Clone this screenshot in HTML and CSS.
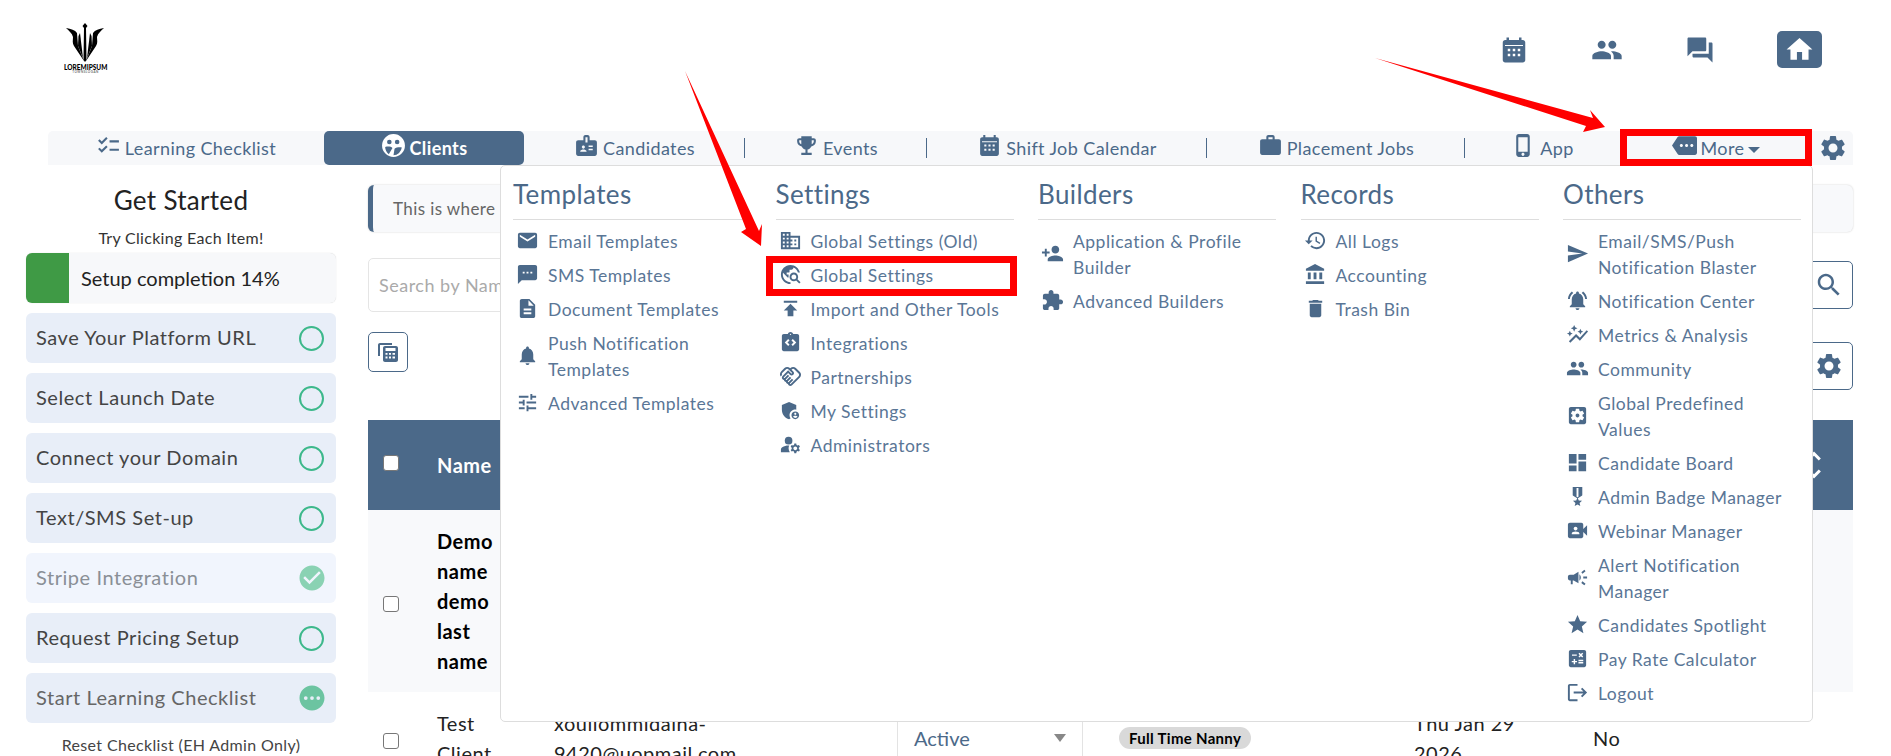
FILE: index.html
```html
<html>
    <head>
        <title>Clients</title>
        <link rel="stylesheet" href="styles.css">
    </head>

    <body>
        <!-- Icon set -->
        <svg class="defs" width="0" height="0">
            <symbol id="i-checklist" viewBox="0 0 24 24"><path d="M22 7h-9v2h9V7zm0 8h-9v2h9v-2zM5.54 11 2 7.46l1.41-1.41 2.12 2.12 4.24-4.24 1.41 1.41L5.54 11zm0 8L2 15.46l1.41-1.41 2.12 2.12 4.24-4.24 1.41 1.41L5.54 19z"/></symbol>
            <symbol id="i-clients" viewBox="0 0 24 24"><path fill-rule="evenodd" d="M12 1a11 11 0 1 0 0 22 11 11 0 0 0 0-22zM8 6.500a2.200 2.200 0 1 1 0 4.400 2.200 2.200 0 0 1 0-4.400zm7.500 0a2.200 2.200 0 1 1 0 4.400 2.200 2.200 0 0 1 0-4.400zM4 13.500c2.500-.8 5.500-.6 7 .8l-3.500 6A9 9 0 0 1 4 13.500zm9 1.500c1.800-1.300 5-1.600 7-1a8.500 8.500 0 0 1-8 7.300z"/></symbol>
            <symbol id="i-badge" viewBox="0 0 24 24"><path d="M20 7h-5V4c0-1.100-.9-2-2-2h-2c-1.100 0-2 .9-2 2v3H4c-1.100 0-2 .9-2 2v11c0 1.100.9 2 2 2h16c1.100 0 2-.9 2-2V9c0-1.100-.9-2-2-2zM9 12c.83 0 1.500.67 1.500 1.500S9.830 15 9 15s-1.500-.67-1.500-1.500S8.170 12 9 12zm3 6H6v-.75c0-1 2-1.500 3-1.500s3 .5 3 1.500V18zm1-9h-2V4h2v5zm5 7.500h-4V15h4v1.500zm0-3h-4V12h4v1.500z"/></symbol>
            <symbol id="i-trophy" viewBox="0 0 24 24"><path d="M19 5h-2V3H7v2H5c-1.100 0-2 .9-2 2v1c0 2.550 1.920 4.630 4.390 4.940.63 1.500 1.980 2.630 3.610 2.960V19H7v2h10v-2h-4v-3.100c1.630-.33 2.980-1.460 3.610-2.960C19.080 12.630 21 10.550 21 8V7c0-1.100-.9-2-2-2zM5 8V7h2v3.820C5.840 10.400 5 9.300 5 8zm14 0c0 1.300-.84 2.400-2 2.820V7h2v1z"/></symbol>
            <symbol id="i-calendar" viewBox="0 0 24 24"><path fill-rule="evenodd" d="M19 4h-1V2h-2v2H8V2H6v2H5c-1.100 0-2 .9-2 2v14c0 1.100.9 2 2 2h14c1.100 0 2-.9 2-2V6c0-1.100-.9-2-2-2zM4.800 8h14.400v.8H4.800zM7 11v2h2v-2zm4 0v2h2v-2zm4 0v2h2v-2zm-8 4v2h2v-2zm4 0v2h2v-2zm4 0v2h2v-2z"/></symbol>
            <symbol id="i-work" viewBox="0 0 24 24"><path d="M20 6h-4V4c0-1.110-.89-2-2-2h-4c-1.110 0-2 .89-2 2v2H4c-1.110 0-1.990.89-1.990 2L2 19c0 1.110.89 2 2 2h16c1.110 0 2-.89 2-2V8c0-1.110-.89-2-2-2zm-6 0h-4V4h4v2z"/></symbol>
            <symbol id="i-phone" viewBox="0 0 24 24"><path d="M15.500 1h-8C6.120 1 5 2.120 5 3.500v17C5 21.880 6.120 23 7.500 23h8c1.380 0 2.500-1.120 2.500-2.500v-17C18 2.120 16.880 1 15.500 1zm-4 21c-.83 0-1.500-.67-1.500-1.500s.67-1.500 1.500-1.500 1.500.67 1.500 1.500-.67 1.500-1.500 1.500zm4.500-4H7V4h9v14z"/></symbol>
            <symbol id="i-more" viewBox="0 0 24 24"><path d="M22 3H7c-.69 0-1.230.35-1.590.88L0 12l5.410 8.110c.36.53.9.89 1.590.89h15c1.100 0 2-.9 2-2V5c0-1.100-.9-2-2-2zM9 13.500c-.83 0-1.500-.67-1.500-1.500s.67-1.500 1.500-1.500 1.500.67 1.500 1.500-.67 1.500-1.500 1.500zm5 0c-.83 0-1.500-.67-1.500-1.500s.67-1.500 1.500-1.500 1.500.67 1.500 1.500-.67 1.500-1.500 1.500zm5 0c-.83 0-1.500-.67-1.500-1.500s.67-1.500 1.500-1.500 1.500.67 1.500 1.500-.67 1.500-1.500 1.500z"/></symbol>
            <symbol id="i-gear" viewBox="0 0 24 24"><path d="M19.140 12.940c.04-.3.06-.61.06-.94 0-.32-.02-.64-.07-.94l2.030-1.580c.18-.14.23-.41.12-.61l-1.920-3.320c-.12-.22-.37-.29-.59-.22l-2.390.96c-.5-.38-1.030-.7-1.620-.94l-.36-2.540c-.04-.24-.24-.41-.48-.41h-3.840c-.24 0-.43.17-.47.41l-.36 2.540c-.59.24-1.130.57-1.620.94l-2.390-.96c-.22-.08-.47 0-.59.22L2.740 8.870c-.12.21-.08.47.12.61l2.030 1.580c-.05.3-.09.63-.09.94s.02.64.07.94l-2.030 1.580c-.18.14-.23.41-.12.61l1.920 3.320c.12.22.37.29.59.22l2.390-.96c.5.38 1.030.7 1.620.94l.36 2.540c.05.24.24.41.48.41h3.840c.24 0 .44-.17.47-.41l.36-2.540c.59-.24 1.130-.56 1.620-.94l2.390.96c.22.08.47 0 .59-.22l1.920-3.320c.12-.22.07-.47-.12-.61l-2.010-1.580zM12 15.600c-1.980 0-3.600-1.620-3.600-3.600s1.620-3.600 3.600-3.600 3.600 1.620 3.600 3.600-1.620 3.600-3.600 3.600z"/></symbol>
            <symbol id="i-people" viewBox="0 0 24 24"><path d="M16 11c1.660 0 2.990-1.340 2.990-3S17.660 5 16 5c-1.660 0-3 1.340-3 3s1.340 3 3 3zm-8 0c1.660 0 2.990-1.340 2.990-3S9.660 5 8 5C6.340 5 5 6.340 5 8s1.340 3 3 3zm0 2c-2.330 0-7 1.170-7 3.500V19h14v-2.500c0-2.330-4.670-3.500-7-3.500zm8 0c-.29 0-.62.02-.97.05 1.160.84 1.970 1.970 1.970 3.450V19h6v-2.500c0-2.330-4.670-3.500-7-3.500z"/></symbol>
            <symbol id="i-forum" viewBox="0 0 24 24"><path d="M21 6h-2v9H6v2c0 .55.45 1 1 1h11l4 4V7c0-.55-.45-1-1-1zm-4 6V3c0-.55-.45-1-1-1H3c-.55 0-1 .45-1 1v14l4-4h10c.55 0 1-.45 1-1z"/></symbol>
            <symbol id="i-home" viewBox="0 0 24 24"><path d="M10 20v-6h4v6h5v-8h3L12 3 2 12h3v8z"/></symbol>
            <symbol id="i-email" viewBox="0 0 24 24"><path d="M20 4H4c-1.100 0-1.990.9-1.990 2L2 18c0 1.100.9 2 2 2h16c1.100 0 2-.9 2-2V6c0-1.100-.9-2-2-2zm0 4-8 5-8-5V6l8 5 8-5v2z"/></symbol>
            <symbol id="i-sms" viewBox="0 0 24 24"><path d="M20 2H4c-1.100 0-1.990.9-1.990 2L2 22l4-4h14c1.100 0 2-.9 2-2V4c0-1.100-.9-2-2-2zM9 11H7V9h2v2zm4 0h-2V9h2v2zm4 0h-2V9h2v2z"/></symbol>
            <symbol id="i-doc" viewBox="0 0 24 24"><path d="M14 2H6c-1.100 0-1.990.9-1.990 2L4 20c0 1.100.89 2 1.990 2H18c1.100 0 2-.9 2-2V8l-6-6zm2 16H8v-2h8v2zm0-4H8v-2h8v2zm-3-5V3.500L18.500 9H13z"/></symbol>
            <symbol id="i-bell" viewBox="0 0 24 24"><path d="M12 22c1.100 0 2-.9 2-2h-4c0 1.100.89 2 2 2zm6-6v-5c0-3.070-1.640-5.640-4.500-6.320V4c0-.83-.67-1.500-1.500-1.500s-1.500.67-1.500 1.500v.68C7.630 5.360 6 7.920 6 11v5l-2 2v1h16v-1l-2-2z"/></symbol>
            <symbol id="i-tune" viewBox="0 0 24 24"><path d="M3 17v2h6v-2H3zM3 5v2h10V5H3zm10 16v-2h8v-2h-8v-2h-2v6h2zM7 9v2H3v2h4v2h2V9H7zm14 4v-2H11v2h10zm-6-4h2V7h4V5h-4V3h-2v6z"/></symbol>
            <symbol id="i-domain" viewBox="0 0 24 24"><path d="M12 7V3H2v18h20V7H12zM6 19H4v-2h2v2zm0-4H4v-2h2v2zm0-4H4V9h2v2zm0-4H4V5h2v2zm4 12H8v-2h2v2zm0-4H8v-2h2v2zm0-4H8V9h2v2zm0-4H8V5h2v2zm10 12h-8v-2h2v-2h-2v-2h2v-2h-2V9h8v10zm-2-8h-2v2h2v-2zm0 4h-2v2h2v-2z"/></symbol>
            <symbol id="i-explore" viewBox="0 0 24 24"><path d="M19.300 16.900c.4-.7.7-1.500.7-2.400 0-2.500-2-4.500-4.500-4.500S11 12 11 14.500s2 4.500 4.500 4.500c.9 0 1.700-.3 2.400-.7l3.200 3.200 1.400-1.400-3.200-3.200zm-3.800.1c-1.400 0-2.500-1.100-2.500-2.500s1.100-2.500 2.500-2.500 2.500 1.100 2.500 2.500-1.100 2.500-2.500 2.500zM12 20v2C6.480 22 2 17.520 2 12S6.480 2 12 2c4.840 0 8.870 3.440 9.800 8h-2.070c-.64-2.460-2.400-4.470-4.730-5.410V5c0 1.100-.9 2-2 2h-2v2c0 .55-.45 1-1 1H8v2h2v3H9l-4.790-4.790C4.080 10.790 4 11.380 4 12c0 4.410 3.590 8 8 8z"/></symbol>
            <symbol id="i-publish" viewBox="0 0 24 24"><path d="M5 4v2h14V4H5zm0 10h4v6h6v-6h4l-7-7-7 7z"/></symbol>
            <symbol id="i-integrations" viewBox="0 0 24 24"><path d="M19 3h-4.180C14.400 1.840 13.300 1 12 1s-2.400.84-2.820 2H5c-1.100 0-2 .9-2 2v14c0 1.100.9 2 2 2h14c1.100 0 2-.9 2-2V5c0-1.100-.9-2-2-2zm-8 11.170-1.410 1.420L6 12l3.590-3.590L11 9.830 8.830 12 11 14.170zm1-9.920c-.41 0-.75-.34-.75-.75s.34-.75.75-.75.75.34.75.75-.34.75-.75.75zm2.410 11.340L13 14.170 15.170 12 13 9.830l1.410-1.420L18 12l-3.590 3.590z"/></symbol>
            <symbol id="i-handshake" viewBox="0 0 24 24"><path d="M12.220 19.850c-.18.18-.5.21-.71 0-.18-.18-.21-.5 0-.71l3.390-3.390-1.410-1.410-3.390 3.390c-.19.2-.51.19-.71 0-.21-.21-.18-.53 0-.71l3.390-3.390-1.410-1.410-3.390 3.390c-.18.18-.5.21-.71 0-.19-.19-.19-.51 0-.71l3.390-3.390-1.420-1.410-3.390 3.390c-.18.18-.5.21-.71 0-.19-.2-.19-.51 0-.71L9.520 8.400l1.870 1.860c.95.95 2.590.94 3.540 0 .98-.98.98-2.560 0-3.540l-1.860-1.860.28-.28c.78-.78 2.050-.78 2.830 0l4.240 4.240c.78.78.78 2.050 0 2.830l-8.200 8.200zm9.610-6.780c1.560-1.560 1.560-4.090 0-5.660l-4.240-4.240c-1.560-1.560-4.090-1.560-5.660 0l-.28.28-.28-.28c-1.560-1.560-4.090-1.560-5.660 0L2.170 6.710c-1.420 1.420-1.550 3.630-.4 5.190l1.450-1.450c-.39-.75-.26-1.700.37-2.330l3.540-3.540c.78-.78 2.050-.78 2.830 0l3.560 3.560c.18.18.21.5 0 .71-.21.21-.53.18-.71 0L9.520 5.570l-5.800 5.790c-.98.97-.98 2.560 0 3.540.39.39.89.63 1.420.7.07.52.3 1.020.7 1.420.4.4.9.63 1.420.7.07.52.3 1.020.7 1.420.4.4.9.63 1.420.7.07.54.31 1.030.7 1.420.47.47 1.100.73 1.770.73.67 0 1.300-.26 1.770-.73l8.210-8.190z"/></symbol>
            <symbol id="i-shield" viewBox="0 0 24 24"><path d="M17 11c.34 0 .67.04 1 .09V6.270L10.500 3 3 6.270v4.910c0 4.540 3.200 8.790 7.500 9.820.55-.13 1.080-.32 1.600-.55-.69-.98-1.100-2.170-1.100-3.450 0-3.310 2.690-6 6-6zM17 13c-2.210 0-4 1.790-4 4s1.790 4 4 4 4-1.790 4-4-1.790-4-4-4zm0 1.380c.62 0 1.120.51 1.120 1.120s-.51 1.120-1.120 1.120-1.120-.51-1.120-1.120.5-1.120 1.120-1.120zm0 5.370c-.93 0-1.740-.46-2.240-1.170.05-.72 1.510-1.080 2.240-1.080s2.190.36 2.240 1.080c-.5.71-1.310 1.170-2.240 1.170z"/></symbol>
            <symbol id="i-admins" viewBox="0 0 24 24"><circle cx="10" cy="8" r="4"/><path d="M10.670 13.020c-.22-.01-.44-.02-.67-.02-2.420 0-4.680.67-6.610 1.820-.88.52-1.390 1.500-1.390 2.530V20h9.260c-.79-1.130-1.260-2.510-1.260-4 0-1.070.25-2.070.67-2.980zM20.750 16c0-.22-.03-.42-.06-.63l1.140-1.010-1-1.730-1.450.49c-.32-.27-.68-.48-1.080-.63L18 11h-2l-.3 1.490c-.4.15-.76.36-1.080.63l-1.450-.49-1 1.730 1.140 1.010c-.03.21-.06.41-.06.63s.03.42.06.63l-1.140 1.010 1 1.730 1.450-.49c.32.27.68.48 1.080.63L16 21h2l.3-1.490c.4-.15.76-.36 1.080-.63l1.450.49 1-1.730-1.140-1.010c.03-.21.06-.41.06-.63zM17 18c-1.100 0-2-.9-2-2s.9-2 2-2 2 .9 2 2-.9 2-2 2z"/></symbol>
            <symbol id="i-personadd" viewBox="0 0 24 24"><path d="M15 12c2.210 0 4-1.790 4-4s-1.790-4-4-4-4 1.790-4 4 1.790 4 4 4zm-9-2V7H4v3H1v2h3v3h2v-3h3v-2H6zm9 4c-2.670 0-8 1.340-8 4v2h16v-2c0-2.660-5.330-4-8-4z"/></symbol>
            <symbol id="i-puzzle" viewBox="0 0 24 24"><path d="M20.500 11H19V7c0-1.100-.9-2-2-2h-4V3.500C13 2.120 11.880 1 10.500 1S8 2.120 8 3.500V5H4c-1.100 0-1.990.9-1.990 2v3.800H3.500c1.490 0 2.700 1.210 2.700 2.700s-1.210 2.700-2.700 2.700H2V20c0 1.100.9 2 2 2h3.800v-1.500c0-1.490 1.210-2.700 2.700-2.700 1.490 0 2.700 1.210 2.700 2.700V22H17c1.100 0 2-.9 2-2v-4h1.500c1.380 0 2.500-1.120 2.500-2.500S21.880 11 20.500 11z"/></symbol>
            <symbol id="i-history" viewBox="0 0 24 24"><path d="M13 3c-4.970 0-9 4.030-9 9H1l3.890 3.890.07.14L9 12H6c0-3.870 3.130-7 7-7s7 3.130 7 7-3.130 7-7 7c-1.930 0-3.680-.79-4.940-2.060l-1.420 1.420C8.270 19.990 10.510 21 13 21c4.970 0 9-4.030 9-9s-4.030-9-9-9zm-1 5v5l4.280 2.540.72-1.210-3.500-2.080V8H12z"/></symbol>
            <symbol id="i-bank" viewBox="0 0 24 24"><path d="M4 10v7h3v-7H4zm6 0v7h3v-7h-3zM2 22h19v-3H2v3zm14-12v7h3v-7h-3zm-4.500-9L2 6v2h19V6l-9.500-5z"/></symbol>
            <symbol id="i-trash" viewBox="0 0 24 24"><path d="M6 19c0 1.100.9 2 2 2h8c1.100 0 2-.9 2-2V7H6v12zM19 4h-3.500l-1-1h-5l-1 1H5v2h14V4z"/></symbol>
            <symbol id="i-send" viewBox="0 0 24 24"><path d="M2.010 21 23 12 2.010 3 2 10l15 2-15 2z"/></symbol>
            <symbol id="i-bellring" viewBox="0 0 24 24"><path d="M7.580 4.080 6.150 2.650C3.750 4.480 2.170 7.300 2.030 10.500h2c.15-2.650 1.510-4.970 3.550-6.420zm12.390 6.420h2c-.15-3.200-1.730-6.020-4.120-7.850l-1.420 1.430c2.020 1.450 3.390 3.770 3.540 6.420zM18 11c0-3.070-1.640-5.640-4.500-6.320V4c0-.83-.67-1.500-1.500-1.500s-1.500.67-1.500 1.500v.68C7.630 5.360 6 7.920 6 11v5l-2 2v1h16v-1l-2-2v-5zm-6 11c1.100 0 2-.9 2-2h-4c.01 1.100.9 2 2 2z"/></symbol>
            <symbol id="i-graph" viewBox="0 0 24 24"><path d="M14.060 9.940 12 9l2.060-.94L15 6l.94 2.060L18 9l-2.060.94L15 12l-.94-2.060zM4 14l.94-2.060L7 11l-2.060-.94L4 8l-.94 2.060L1 11l2.060.94L4 14zm4.500-5 1.090-2.410L12 5.500 9.590 4.410 8.500 2 7.410 4.410 5 5.500l2.410 1.090L8.500 9zm-4 11.500 6-6.010 4 4L23 8.930l-1.410-1.410-7.090 7.970-4-4L3 19l1.500 1.500z"/></symbol>
            <symbol id="i-gearbox" viewBox="0 0 24 24"><path d="M12 10c-1.100 0-2 .9-2 2s.9 2 2 2 2-.9 2-2-.9-2-2-2zm7-7H5c-1.110 0-2 .9-2 2v14c0 1.100.89 2 2 2h14c1.110 0 2-.9 2-2V5c0-1.100-.89-2-2-2zm-1.750 9c0 .23-.02.46-.05.68l1.480 1.160c.13.11.17.3.08.45l-1.400 2.420c-.09.15-.27.21-.43.15l-1.740-.7c-.36.28-.76.51-1.180.69l-.26 1.850c-.03.17-.18.3-.35.3h-2.800c-.17 0-.32-.13-.35-.29l-.26-1.850c-.43-.18-.82-.41-1.180-.69l-1.740.7c-.16.06-.34 0-.43-.15l-1.400-2.420c-.09-.15-.05-.34.08-.45l1.480-1.160c-.03-.23-.05-.46-.05-.69 0-.23.02-.46.05-.68l-1.480-1.160c-.13-.11-.17-.3-.08-.45l1.400-2.420c.09-.15.27-.21.43-.15l1.740.7c.36-.28.76-.51 1.180-.69l.26-1.850c.03-.17.18-.3.35-.3h2.800c.17 0 .32.13.35.29l.26 1.850c.43.18.82.41 1.180.69l1.740-.7c.16-.06.34 0 .43.15l1.400 2.420c.09.15.05.34-.08.45l-1.480 1.160c.03.23.05.46.05.69z"/></symbol>
            <symbol id="i-board" viewBox="0 0 24 24"><path d="M3 13h8V3H3v10zm0 8h8v-6H3v6zm10 0h8V11h-8v10zm0-18v6h8V3h-8z"/></symbol>
            <symbol id="i-medal" viewBox="0 0 24 24"><path d="M17 10.430V2H7v8.430c0 .35.18.68.49.86l4.180 2.510-.99 2.340-3.410.29 2.590 2.240L9.070 22 12 20.230 14.930 22l-.78-3.330 2.590-2.240-3.410-.29-.99-2.340 4.180-2.510c.3-.18.48-.5.48-.86zm-4 1.800-1 .6-1-.6V3h2v9.230z"/></symbol>
            <symbol id="i-video" viewBox="0 0 24 24"><path d="M18 10.480V6c0-1.100-.9-2-2-2H4c-1.100 0-2 .9-2 2v12c0 1.100.9 2 2 2h12c1.100 0 2-.9 2-2v-4.480l4 3.980v-11l-4 3.980zM10 8c1.100 0 2 .9 2 2s-.9 2-2 2-2-.9-2-2 .9-2 2-2zm4 8H6v-.57c0-.81.48-1.530 1.220-1.850.85-.37 1.790-.58 2.780-.58.99 0 1.930.21 2.780.58.74.32 1.220 1.040 1.220 1.850V16z"/></symbol>
            <symbol id="i-megaphone" viewBox="0 0 24 24"><path d="M18 11v2h4v-2h-4zm-2 6.610c.96.71 2.210 1.650 3.200 2.390.4-.53.8-1.070 1.200-1.600-.99-.74-2.240-1.680-3.200-2.400-.4.54-.8 1.080-1.200 1.610zM20.400 5.600c-.4-.53-.8-1.070-1.200-1.600-.99.74-2.240 1.680-3.200 2.400.4.53.8 1.070 1.200 1.600.96-.72 2.210-1.650 3.200-2.400zM4 9c-1.100 0-2 .9-2 2v2c0 1.100.9 2 2 2h1v4h2v-4h1l5 3V6L8 9H4zm11.500 3c0-1.330-.58-2.530-1.500-3.350v6.690c.92-.81 1.500-2.010 1.500-3.340z"/></symbol>
            <symbol id="i-star" viewBox="0 0 24 24"><path d="M12 17.270 18.180 21l-1.640-7.030L22 9.240l-7.190-.61L12 2 9.190 8.630 2 9.240l5.460 4.730L5.820 21z"/></symbol>
            <symbol id="i-calc" viewBox="0 0 24 24"><path d="M19 3H5c-1.100 0-2 .9-2 2v14c0 1.100.9 2 2 2h14c1.100 0 2-.9 2-2V5c0-1.100-.9-2-2-2zm-5.970 4.060L14.090 6l1.410 1.410L16.910 6l1.060 1.060-1.410 1.410 1.410 1.410-1.060 1.060-1.410-1.400-1.410 1.410-1.060-1.060 1.410-1.410-1.410-1.420zm-6.780.66h5v1.500h-5v-1.500zM11.500 16h-2v2H8v-2H6v-1.500h2v-2h1.500v2h2V16zm6.500 1.250h-5v-1.500h5v1.500zm0-2.500h-5v-1.500h5v1.500z"/></symbol>
            <symbol id="i-logout" viewBox="0 0 24 24"><path d="M17 7l-1.410 1.410L18.170 11H8v2h10.170l-2.580 2.580L17 17l5-5zM4 5h8V3H4c-1.100 0-2 .9-2 2v14c0 1.100.9 2 2 2h8v-2H4V5z"/></symbol>
            <symbol id="i-search" viewBox="0 0 24 24"><path d="M15.500 14h-.79l-.28-.27C15.410 12.590 16 11.110 16 9.500 16 5.910 13.090 3 9.500 3S3 5.910 3 9.500 5.910 16 9.500 16c1.610 0 3.090-.59 4.230-1.570l.27.28v.79l5 4.990L20.490 19l-4.990-5zm-6 0C7.010 14 5 11.990 5 9.500S7.010 5 9.500 5 14 7.010 14 9.500 11.990 14 9.500 14z"/></symbol>
            <symbol id="i-sheets" viewBox="0 0 24 24"><path fill-rule="evenodd" d="M9 6h11c1.100 0 2 .9 2 2v12c0 1.100-.9 2-2 2H9c-1.100 0-2-.9-2-2V8c0-1.100.9-2 2-2zm.5 2v3h10V8zm0 5v1.800h2V13zm3.500 0v1.800h2V13zm3.500 0v1.800h2.500V13zm-7 3.500v2h2v-2zm3.500 0v2h2v-2zm3.500 0v2h2.500v-2z"/><path d="M4 3h12v2H4v11H2V5c0-1.100.9-2 2-2z"/></symbol>
            <symbol id="i-unfold" viewBox="0 0 24 24"><path d="M12 5.830 15.170 9l1.410-1.410L12 3 7.410 7.590 8.830 9 12 5.830zm0 12.340L8.830 15l-1.410 1.410L12 21l4.590-4.590L15.170 15 12 18.170z"/></symbol>
            <symbol id="i-checkcircle" viewBox="0 0 24 24"><path d="M12 2C6.480 2 2 6.480 2 12s4.480 10 10 10 10-4.480 10-10S17.520 2 12 2zm-2 15-5-5 1.410-1.410L10 14.170l7.590-7.590L19 8l-9 9z"/></symbol>
            <symbol id="i-dots" viewBox="0 0 24 24"><path d="M12 2C6.480 2 2 6.480 2 12s4.480 10 10 10 10-4.480 10-10S17.520 2 12 2zM7 13.500a1.500 1.500 0 1 1 0-3 1.500 1.500 0 0 1 0 3zm5 0a1.500 1.500 0 1 1 0-3 1.500 1.500 0 0 1 0 3zm5 0a1.500 1.500 0 1 1 0-3 1.500 1.500 0 0 1 0 3z"/></symbol>
        </svg>

        <div class="page">
            <!-- Header -->
            <div class="header">
                <div class="logo">
                    <svg class="logo-mark" viewBox="64 22 43 42">
                        <path d="M85 23l2.500 3-1.500 2 .5 32-1.500 2-1.500-2 .5-32-1.500-2z"/>
                        <path d="M66 28c5 1 9 2 11 5l1 13 6 15-10-15c-2-3-1-6-1-9-1-4-4-6-7-9z"/>
                        <path d="M104 28c-5 1-9 2-11 5l-1 13-6 15 10-15c2-3 1-6 1-9 1-4 4-6 7-9z"/>
                        <path d="M80 33l3 25-5-12 .5-10z"/>
                        <path d="M90 33l-3 25 5-12-.5-10z"/>
                    </svg>
                    <div class="logo-name">LOREMIPSUM</div>
                    <div class="logo-sub">TOWNSLOGAN</div>
                </div>
                <div class="header-icons">
                    <svg class="head-icon"><use href="#i-calendar"/></svg>
                    <svg class="head-icon people"><use href="#i-people"/></svg>
                    <svg class="head-icon"><use href="#i-forum"/></svg>
                    <div class="home-btn"><svg><use href="#i-home"/></svg></div>
                </div>
            </div>

            <!-- Nav bar -->
            <div class="topnav">
                <a class="nav-item"><svg class="nav-icon"><use href="#i-checklist"/></svg>Learning Checklist</a>
                <a class="nav-item active"><svg class="nav-icon"><use href="#i-clients"/></svg>Clients</a>
                <a class="nav-item sep"><svg class="nav-icon"><use href="#i-badge"/></svg>Candidates</a>
                <a class="nav-item sep"><svg class="nav-icon"><use href="#i-trophy"/></svg>Events</a>
                <a class="nav-item sep"><svg class="nav-icon"><use href="#i-calendar"/></svg>Shift Job Calendar</a>
                <a class="nav-item sep"><svg class="nav-icon"><use href="#i-work"/></svg>Placement Jobs</a>
                <a class="nav-item"><svg class="nav-icon"><use href="#i-phone"/></svg>App</a>
                <a class="nav-item"><svg class="nav-icon"><use href="#i-more"/></svg>More<span class="caret"></span></a>
                <a class="nav-item gear"><svg class="nav-gear"><use href="#i-gear"/></svg></a>
            </div>

            <!-- Contents -->
            <div class="content">
                <div class="sidebar">
                    <div class="side-title">Get Started</div>
                    <div class="side-sub">Try Clicking Each Item!</div>
                    <div class="progress"><div class="progress-fill"></div><span>Setup completion 14%</span></div>
                    <div class="step">Save Your Platform URL<span class="ring"></span></div>
                    <div class="step">Select Launch Date<span class="ring"></span></div>
                    <div class="step">Connect your Domain<span class="ring"></span></div>
                    <div class="step">Text/SMS Set-up<span class="ring"></span></div>
                    <div class="step done">Stripe Integration<svg class="step-icon"><use href="#i-checkcircle"/></svg></div>
                    <div class="step">Request Pricing Setup<span class="ring"></span></div>
                    <div class="step faded">Start Learning Checklist<svg class="step-icon"><use href="#i-dots"/></svg></div>
                    <div class="reset">Reset Checklist (EH Admin Only)</div>
                </div>

                <div class="main">
                    <div class="notice">This is where</div>
                    <div class="search-row">
                        <input class="search" placeholder="Search by Name">
                        <div class="square-btn tall"><svg><use href="#i-search"/></svg></div>
                    </div>
                    <div class="tools-row">
                        <div class="square-btn small"><svg><use href="#i-sheets"/></svg></div>
                        <div class="square-btn tall"><svg><use href="#i-gear"/></svg></div>
                    </div>

                    <div class="table">
                        <div class="row head">
                            <div class="cell"><span class="check"></span></div>
                            <div class="cell">Name</div>
                            <div class="cell sort"><svg><use href="#i-unfold"/></svg></div>
                        </div>
                        <div class="row first">
                            <div class="cell"><span class="check"></span></div>
                            <div class="cell name strong">Demo name demo last name</div>
                        </div>
                        <div class="row second">
                            <div class="cell"><span class="check"></span></div>
                            <div class="cell name">Test Client</div>
                            <div class="cell email">xouilommidaina-<br>9420@uopmail.com</div>
                            <div class="cell status">Active<span class="status-arrow"></span></div>
                            <div class="cell job"><span class="badge">Full Time Nanny</span></div>
                            <div class="cell date">Thu Jan 29<br>2026</div>
                            <div class="cell">No</div>
                        </div>
                    </div>
                </div>
            </div>

            <!-- More menu -->
            <div class="menu">
                <div class="menu-col">
                    <div class="menu-title">Templates</div>
                    <a class="menu-item"><svg><use href="#i-email"/></svg><span>Email Templates</span></a>
                    <a class="menu-item"><svg><use href="#i-sms"/></svg><span>SMS Templates</span></a>
                    <a class="menu-item"><svg><use href="#i-doc"/></svg><span>Document Templates</span></a>
                    <a class="menu-item"><svg><use href="#i-bell"/></svg><span>Push Notification<br>Templates</span></a>
                    <a class="menu-item"><svg><use href="#i-tune"/></svg><span>Advanced Templates</span></a>
                </div>
                <div class="menu-col">
                    <div class="menu-title">Settings</div>
                    <a class="menu-item"><svg><use href="#i-domain"/></svg><span>Global Settings (Old)</span></a>
                    <a class="menu-item"><svg><use href="#i-explore"/></svg><span>Global Settings</span></a>
                    <a class="menu-item"><svg><use href="#i-publish"/></svg><span>Import and Other Tools</span></a>
                    <a class="menu-item"><svg><use href="#i-integrations"/></svg><span>Integrations</span></a>
                    <a class="menu-item"><svg><use href="#i-handshake"/></svg><span>Partnerships</span></a>
                    <a class="menu-item"><svg><use href="#i-shield"/></svg><span>My Settings</span></a>
                    <a class="menu-item"><svg><use href="#i-admins"/></svg><span>Administrators</span></a>
                </div>
                <div class="menu-col">
                    <div class="menu-title">Builders</div>
                    <a class="menu-item"><svg><use href="#i-personadd"/></svg><span>Application &amp; Profile<br>Builder</span></a>
                    <a class="menu-item"><svg><use href="#i-puzzle"/></svg><span>Advanced Builders</span></a>
                </div>
                <div class="menu-col">
                    <div class="menu-title">Records</div>
                    <a class="menu-item"><svg><use href="#i-history"/></svg><span>All Logs</span></a>
                    <a class="menu-item"><svg><use href="#i-bank"/></svg><span>Accounting</span></a>
                    <a class="menu-item"><svg><use href="#i-trash"/></svg><span>Trash Bin</span></a>
                </div>
                <div class="menu-col">
                    <div class="menu-title">Others</div>
                    <a class="menu-item"><svg><use href="#i-send"/></svg><span>Email/SMS/Push<br>Notification Blaster</span></a>
                    <a class="menu-item"><svg><use href="#i-bellring"/></svg><span>Notification Center</span></a>
                    <a class="menu-item"><svg><use href="#i-graph"/></svg><span>Metrics &amp; Analysis</span></a>
                    <a class="menu-item"><svg><use href="#i-people"/></svg><span>Community</span></a>
                    <a class="menu-item"><svg><use href="#i-gearbox"/></svg><span>Global Predefined<br>Values</span></a>
                    <a class="menu-item"><svg><use href="#i-board"/></svg><span>Candidate Board</span></a>
                    <a class="menu-item"><svg><use href="#i-medal"/></svg><span>Admin Badge Manager</span></a>
                    <a class="menu-item"><svg><use href="#i-video"/></svg><span>Webinar Manager</span></a>
                    <a class="menu-item"><svg><use href="#i-megaphone"/></svg><span>Alert Notification<br>Manager</span></a>
                    <a class="menu-item"><svg><use href="#i-star"/></svg><span>Candidates Spotlight</span></a>
                    <a class="menu-item"><svg><use href="#i-calc"/></svg><span>Pay Rate Calculator</span></a>
                    <a class="menu-item"><svg><use href="#i-logout"/></svg><span>Logout</span></a>
                </div>
            </div>

            <!-- Red annotations drawn on the screenshot -->
            <svg class="marks" viewBox="0 0 1891 756">
                <rect x="1623.500" y="132.500" width="185" height="30"/>
                <rect x="769.500" y="259.500" width="244" height="33"/>
                <polygon points="685,71 759,231 762,224 761,246 741,232 746,229"/>
                <polygon points="1375,58 1593,118 1590,110 1605,127 1583,132 1586,126"/>
            </svg>
        </div>
    </body>
</html>
```

FILE: styles.css
```css
/* Page */
html, body {
    margin: 0;
    height: 100%;
}
body {
    background: white;
    color: #333;
    font-family: Lato, "Noto Sans", sans-serif;
    font-size: 18px;
}
svg {
    fill: #4b6989;
}
.defs {
    position: absolute;
}
.page {
    position: relative;
    width: 1891px;
    height: 756px;
    overflow: hidden;
}

/* Header */
.header {
    height: 131px;
    box-sizing: border-box;
    padding: 22px 69px 0 64px;
    display: flex;
    justify-content: space-between;
    align-items: flex-start;
}
.logo {
    width: 43px;
    text-align: center;
}
.logo-mark {
    display: block;
    width: 43px;
    height: 42px;
    fill: black;
}
.logo-name {
    font-size: 6.500px;
    font-weight: 900;
    line-height: 7px;
    color: black;
}
.logo-sub {
    font-size: 3px;
    line-height: 3px;
    letter-spacing: 0.5px;
    color: #333;
}
.header-icons {
    display: flex;
    align-items: center;
    gap: 62px;
    margin-top: 9px;
}
.head-icon {
    width: 30px;
    height: 30px;
}
.head-icon.people {
    width: 32px;
    height: 32px;
}
.home-btn {
    width: 45px;
    height: 37px;
    background-color: #4b6989;
    border-radius: 5px;
    display: flex;
    align-items: center;
    justify-content: center;
}
.home-btn svg {
    width: 31px;
    height: 31px;
    fill: white;
}

/* Navigation Bar */
.topnav {
    margin: 0 38px 0 48px;
    height: 34px;
    background-color: #f7f8fa;
    border-radius: 5px 5px 0 0;
    display: grid;
    grid-template-columns: 276px 200px 221px 182px 280px 258px 155px 192px 41px;
}
.nav-item {
    position: relative;
    display: flex;
    align-items: center;
    justify-content: center;
    gap: 4px;
    color: #4b6989;
    font-size: 18px;
    letter-spacing: 0.4px;
    line-height: 34px;
}
.nav-item.active {
    background-color: #4b6989;
    color: white;
    font-weight: 700;
    border-radius: 5px;
}
.nav-item.active svg {
    fill: white;
}
.nav-item.sep::after {
    content: "";
    position: absolute;
    right: 0;
    top: 7px;
    height: 20px;
    border-right: 1px solid #4b6989;
}
.nav-icon {
    width: 25px;
    height: 25px;
    margin-top: -5px;
}
.nav-gear {
    width: 30px;
    height: 30px;
}
.caret {
    width: 0;
    height: 0;
    border-left: 6px solid transparent;
    border-right: 6px solid transparent;
    border-top: 6px solid #4b6989;
    margin-top: 4px;
}

/* Contents */
.content {
    display: flex;
    gap: 32px;
    padding: 0 38px 0 26px;
}
.sidebar {
    width: 310px;
    flex-shrink: 0;
    padding-top: 20px;
}
.side-title {
    font-size: 26px;
    line-height: 30px;
    letter-spacing: 0.3px;
    text-align: center;
    color: #222;
}
.side-sub {
    font-size: 16px;
    letter-spacing: 0.3px;
    line-height: 24px;
    margin-top: 11px;
    margin-bottom: 3px;
    text-align: center;
    color: #333;
}
.progress {
    height: 50px;
    background-color: #f7f8fa;
    border-radius: 6px;
    display: flex;
    align-items: center;
    gap: 12px;
    font-size: 20px;
    color: #222;
    box-shadow: 0 0 1px #ccc;
}
.progress-fill {
    width: 43px;
    height: 100%;
    background-color: #3f9a45;
    border-radius: 6px 0 0 6px;
}
.step {
    height: 50px;
    box-sizing: border-box;
    margin-top: 10px;
    padding: 0 12px 2px 10px;
    background-color: #e8eef8;
    border-radius: 6px;
    display: flex;
    align-items: center;
    justify-content: space-between;
    font-size: 20px;
    letter-spacing: 0.55px;
    color: #444;
}
.step.done {
    background-color: #f1f5fd;
    color: #8a8f96;
}
.step.faded {
    color: #666;
}
.ring {
    width: 25px;
    height: 25px;
    margin-top: 2px;
    box-sizing: border-box;
    border: 2.5px solid #3db88b;
    border-radius: 50%;
}
.step-icon {
    width: 30px;
    height: 30px;
    margin: 2px -2.5px 0 0;
    fill: #6cc4a1;
}
.step.done .step-icon {
    fill: #8ad2b3;
}
.reset {
    margin-top: 10px;
    font-size: 16px;
    letter-spacing: 0.35px;
    line-height: 24px;
    text-align: center;
    color: #444;
}

/* Main column */
.main {
    flex: 1;
    min-width: 0;
    padding-top: 20px;
}
.notice {
    height: 47px;
    box-sizing: border-box;
    padding: 0 20px;
    border-left: 5px solid #4b6989;
    border-radius: 6px;
    background-color: #f8f9fb;
    box-shadow: 0 0 2px #ccc;
    font-size: 17px;
    letter-spacing: 0.4px;
    line-height: 47px;
    color: #666;
}
.search-row {
    margin-top: 26px;
    display: flex;
    align-items: center;
    gap: 10px;
}
.search {
    flex: 1;
    height: 54px;
    box-sizing: border-box;
    padding: 0 10px;
    border: 1px solid #e5e5e5;
    border-radius: 5px;
    font-family: Lato, sans-serif;
    font-size: 18px;
    letter-spacing: 0.5px;
}
.search::placeholder {
    color: #aaa;
}
.tools-row {
    margin-top: 20px;
    height: 58px;
    display: flex;
    justify-content: space-between;
    align-items: flex-end;
}
.square-btn {
    box-sizing: border-box;
    border: 1px solid #4b6989;
    border-radius: 5px;
    display: flex;
    align-items: center;
    justify-content: center;
}
.square-btn.tall {
    width: 48px;
    height: 48px;
}
.square-btn.tall svg {
    width: 30px;
    height: 30px;
}
.square-btn.small {
    width: 40px;
    height: 40px;
    align-self: flex-start;
}
.square-btn.small svg {
    width: 24px;
    height: 24px;
}

/* Table */
.table {
    margin-top: 30px;
}
.row {
    display: grid;
    grid-template-columns: 69px 117px 343px 186px 331px 179px 1fr;
    font-size: 20px;
    letter-spacing: 0.5px;
    line-height: 30px;
}
.cell {
    display: flex;
    align-items: center;
}
.row .cell:first-child {
    padding-left: 15px;
}
.head {
    height: 90px;
    background-color: #4b6989;
    color: white;
    font-weight: 700;
}
.head .check {
    margin-top: -5px;
}
.sort {
    grid-column: 7;
    justify-content: flex-end;
    padding-right: 21px;
}
.sort svg {
    width: 36px;
    height: 36px;
    fill: white;
}
.first {
    height: 182px;
    background-color: #f8f9fb;
}
.first .check, .second .check {
    margin-top: 6px;
}
.name {
    padding-right: 50px;
}
.strong {
    font-weight: 700;
    color: black;
}
.second {
    height: 92px;
    color: #222;
}
.status {
    border-left: 1px solid #e3e3e3;
    border-right: 1px solid #e3e3e3;
    padding: 0 16px;
    justify-content: space-between;
    letter-spacing: 0;
    color: #4b6989;
}
.status-arrow {
    width: 0;
    height: 0;
    border-left: 6px solid transparent;
    border-right: 6px solid transparent;
    border-top: 8px solid #888;
}
.job {
    padding-left: 36px;
}
.badge {
    background-color: #d9d9d9;
    border-radius: 11px;
    padding: 0 10px;
    font-size: 15px;
    font-weight: 700;
    letter-spacing: 0.3px;
    line-height: 22px;
    color: black;
}
.check {
    display: block;
    width: 14px;
    height: 14px;
    border: 1px solid #777;
    border-radius: 3px;
    background: white;
}

/* More menu */
.menu {
    position: absolute;
    left: 500px;
    top: 165px;
    width: 1313px;
    height: 557px;
    box-sizing: border-box;
    padding: 0 12px;
    background-color: white;
    border: 1px solid #ddd;
    border-radius: 5px;
    display: grid;
    grid-template-columns: repeat(5, 238px);
    column-gap: 24.500px;
    align-content: start;
}
.menu-title {
    font-size: 26px;
    letter-spacing: 0.4px;
    line-height: 30px;
    padding: 13px 0 10px;
    margin-bottom: 5px;
    border-bottom: 1px solid #ddd;
    color: #4b6989;
}
.menu-item {
    display: flex;
    align-items: center;
    gap: 9px;
    padding: 4px 0 4px 3px;
    font-size: 17.500px;
    letter-spacing: 0.5px;
    line-height: 26px;
    color: #5a7696;
}
.menu-item svg {
    width: 23px;
    height: 23px;
    flex-shrink: 0;
    margin-top: -3px;
}

/* Red annotations */
.marks {
    position: absolute;
    left: 0;
    top: 0;
    width: 1891px;
    height: 756px;
    pointer-events: none;
}
.marks rect {
    fill: none;
    stroke: #ff0000;
    stroke-width: 7;
}
.marks polygon {
    fill: #ff0000;
}
```
